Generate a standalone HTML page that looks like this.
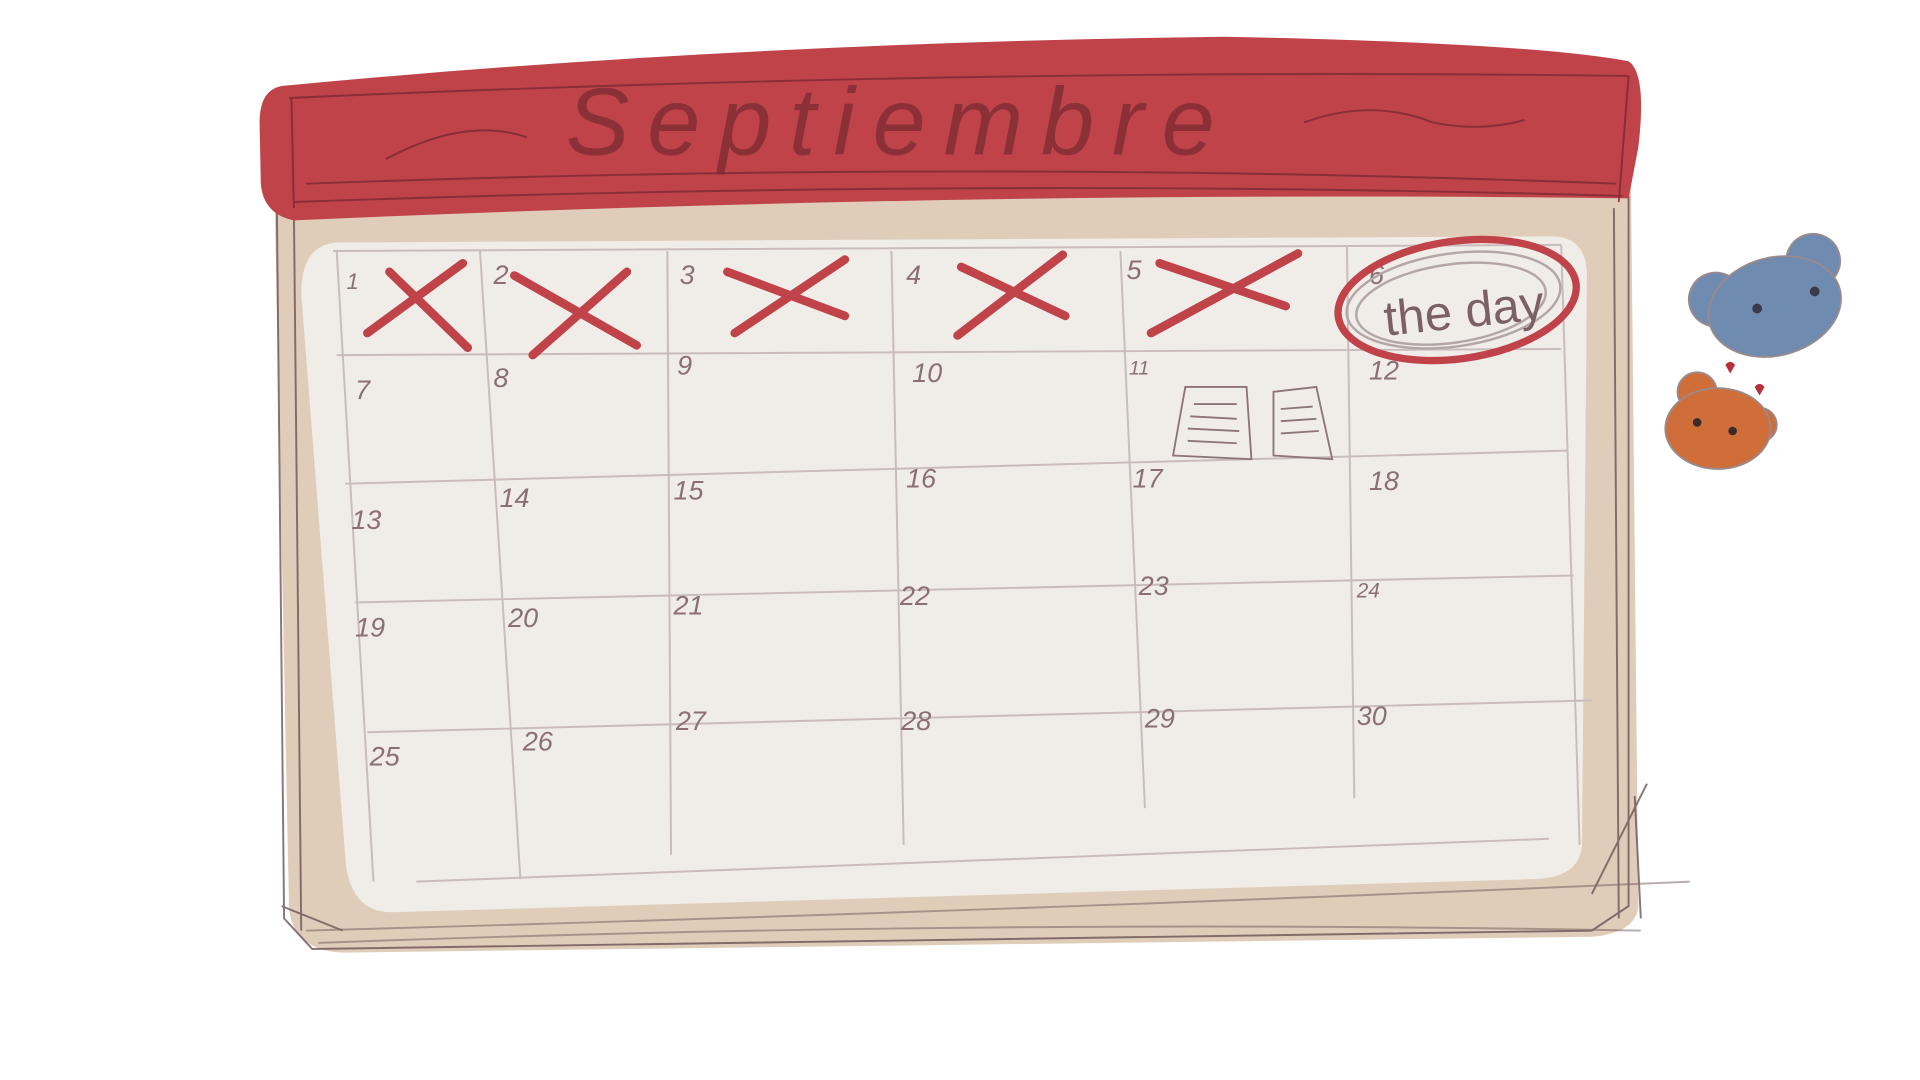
<!DOCTYPE html>
<html><head><meta charset="utf-8"><style>html,body{margin:0;padding:0;background:#fff;width:1920px;height:1080px;overflow:hidden}svg{display:block}</style></head><body>
<svg width="1920" height="1080" viewBox="0 0 1568 882" preserveAspectRatio="none" xmlns="http://www.w3.org/2000/svg">
<rect width="1568" height="882" fill="#fff"/>
<path d="M224 150 L1332 150 L1338 740 Q1336 762 1300 765 L280 778 Q238 776 236 740 Z" fill="#dfcdb9"/>
<path d="M275 198 L1270 193 Q1296 195 1296 225 L1292 690 Q1290 718 1250 718 L320 745 Q285 745 282 700 L246 240 Q246 200 275 198 Z" fill="#f0ece8"/>
<g fill="none" stroke="#6e5358" stroke-width="1.6" opacity="0.8">
<path d="M226 160 L232 750 L255 775 L1300 760 L1330 740 L1330 160"/>
<path d="M240 170 L246 760 M1318 170 L1322 750 M230 740 L280 760 M1300 730 L1345 640 M1335 650 L1340 750"/>
<path d="M250 760 Q800 745 1380 720" opacity=".6"/>
<path d="M260 770 Q800 750 1340 760" opacity=".6"/>
</g>
<g fill="none" stroke="#c9bcbc" stroke-width="1.6">
<path d="M272 205 L1275 200 M275 290 L1275 285 M282 395 L1280 368 M290 492 L1285 470 M300 598 L1300 572 M340 720 L1265 685"/>
<path d="M275 205 L305 720 M392 205 L425 718 M545 205 L548 698 M728 205 L738 690 M915 205 L935 660 M1100 200 L1106 652 M1275 200 L1290 690"/>
</g>
<g font-family="'Liberation Sans',sans-serif" font-size="22" fill="#8a7075" font-style="italic">
<text x="283" y="236" font-size="18">1</text><text x="403" y="232">2</text><text x="555" y="232">3</text><text x="740" y="232">4</text><text x="920" y="228">5</text><text x="1118" y="232">6</text>
<text x="290" y="326">7</text><text x="403" y="316">8</text><text x="553" y="306">9</text><text x="745" y="312">10</text><text x="922" y="306" font-size="16">11</text><text x="1118" y="310">12</text>
<text x="287" y="432">13</text><text x="408" y="414">14</text><text x="550" y="408">15</text><text x="740" y="398">16</text><text x="925" y="398">17</text><text x="1118" y="400">18</text>
<text x="290" y="520">19</text><text x="415" y="512">20</text><text x="550" y="502">21</text><text x="735" y="494">22</text><text x="930" y="486">23</text><text x="1108" y="488" font-size="17">24</text>
<text x="302" y="625">25</text><text x="427" y="613">26</text><text x="552" y="596">27</text><text x="736" y="596">28</text><text x="935" y="594">29</text><text x="1108" y="592">30</text>
</g>
<g stroke="#c0434a" stroke-width="7" stroke-linecap="round" fill="none">
<path d="M318 222 L382 284 M378 215 L300 272"/>
<path d="M420 225 L520 282 M512 222 L435 290"/>
<path d="M594 222 L690 258 M690 212 L600 272"/>
<path d="M785 218 L870 258 M868 208 L782 274"/>
<path d="M947 215 L1050 250 M1060 207 L940 272"/>
</g>
<g fill="none" stroke="#8c7478" stroke-width="1.5">
<path d="M968 316 L1018 316 L1022 375 L958 372 Z M1040 320 L1075 316 L1088 375 L1040 372 Z"/>
<path d="M975 330 L1010 330 M972 340 L1010 342 M970 350 L1012 352 M970 360 L1010 362 M1046 334 L1072 332 M1046 344 L1075 342 M1046 354 L1077 352"/>
</g>
<g fill="none">
<ellipse cx="1187" cy="245" rx="88" ry="38" stroke="#b3a6a7" stroke-width="2" transform="rotate(-8 1187 245)"/>
<ellipse cx="1185" cy="248" rx="78" ry="32" stroke="#b3a6a7" stroke-width="2" transform="rotate(-8 1185 248)"/>
<ellipse cx="1190" cy="245" rx="98" ry="48" stroke="#c0434a" stroke-width="6" transform="rotate(-8 1190 245)"/>
</g>
<text x="1130" y="268" font-family="'Liberation Sans',sans-serif" font-size="40" fill="#7b6166" transform="rotate(-6 1190 255)">the day</text>
<path d="M232 70 Q600 35 1000 30 Q1250 35 1330 50 Q1345 60 1338 120 L1330 162 Q800 155 240 180 Q215 175 213 150 L212 100 Q212 72 232 70 Z" fill="#c0434a"/>
<g fill="none" stroke="#7b2a33" stroke-width="1.6" opacity=".8">
<path d="M236 80 Q800 55 1330 62 M238 80 L240 170 M1330 62 L1322 165 M240 165 Q800 145 1325 160 M250 150 Q800 130 1320 150"/>
<path d="M315 130 Q380 95 430 112 M1065 100 Q1120 80 1170 100 Q1210 108 1245 98"/>
</g>
<text x="462" y="126" textLength="530" lengthAdjust="spacing" font-family="'Liberation Sans',sans-serif" font-style="italic" font-size="78" fill="#7b2a33" opacity=".75">Septiembre</text>
<g stroke="#9a8a8c" stroke-width="1.5">
<g transform="rotate(-15 1450 245)">
<circle cx="1403" cy="232" r="22" fill="#6f8bb0"/><circle cx="1488" cy="222" r="22" fill="#6f8bb0"/>
<ellipse cx="1448" cy="250" rx="55" ry="40" fill="#6f8bb0"/>
</g>
<circle cx="1386" cy="320" r="16" fill="#d06e3a"/><circle cx="1437" cy="347" r="14" fill="#d06e3a"/>
<ellipse cx="1403" cy="350" rx="43" ry="33" fill="#d06e3a"/>
</g>
<circle cx="1435" cy="252" r="4" fill="#3a3a4a"/><circle cx="1482" cy="238" r="4" fill="#3a3a4a"/>
<circle cx="1386" cy="345" r="3.5" fill="#3a2a2a"/><circle cx="1415" cy="352" r="3.5" fill="#3a2a2a"/>
<path d="M1409 298 q4 -5 8 0 l-4 7 z M1433 316 q4 -5 8 0 l-4 7 z" fill="#b8303a"/>
</svg>
</body></html>
